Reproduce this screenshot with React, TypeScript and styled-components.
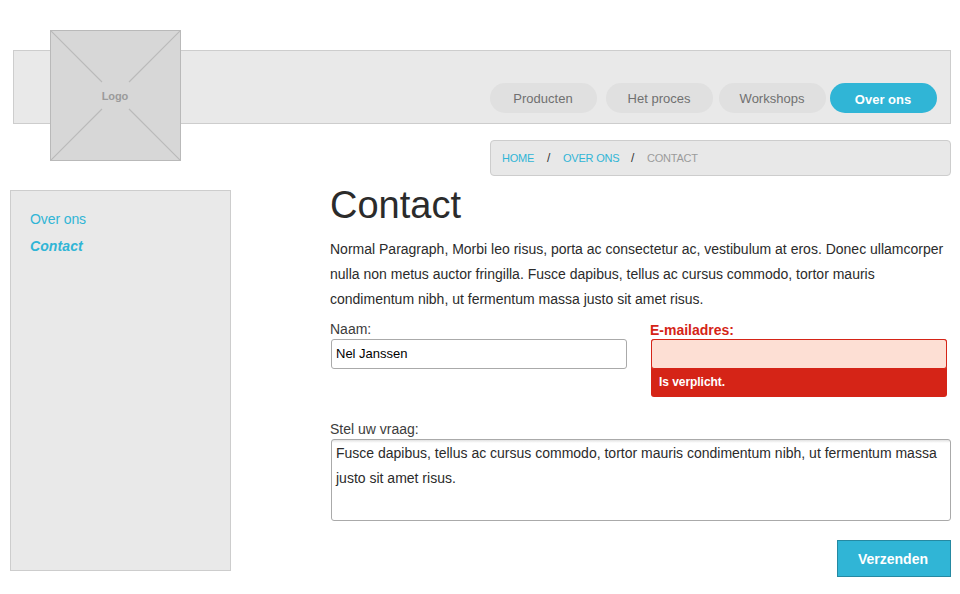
import React from "react";
import styled, { createGlobalStyle } from "styled-components";

const Global = createGlobalStyle`
  * { box-sizing: border-box; }
  body { margin: 0; background: #fff; font-family: "Liberation Sans", Arial, sans-serif; color: #2b2b2b; }
`;

const Page = styled.div`
  width: 960px;
  height: 594px;
  padding: 50px 9px 0 10px;
  overflow: hidden;
`;

const Header = styled.header`
  position: relative;
  display: flex;
  justify-content: flex-end;
  height: 74px;
  margin-left: 3px;
  padding: 32px 13px 0 0;
  background: #e9e9e9;
  border: 1px solid #cdcdcd;
`;

const Logo = styled.div`
  position: absolute;
  top: -21px;
  left: 36px;
  display: grid;
  place-items: center;
  width: 131px;
  height: 131px;
  background: #d7d7d7;
  border: 1px solid #b9b9b9;
`;

const LogoLines = styled.svg`
  grid-area: 1 / 1;
  width: 129px;
  height: 129px;
`;

const LogoText = styled.span`
  grid-area: 1 / 1;
  margin-right: 1px;
  font-size: 11px;
  line-height: 14px;
  font-weight: bold;
  letter-spacing: -0.1px;
  color: #9b9b9b;
`;

const Nav = styled.nav`
  display: flex;
`;

const Pill = styled.a<{ $active?: boolean; $gap?: number }>`
  width: 107px;
  height: 30px;
  margin-left: ${(p) => p.$gap ?? 0}px;
  padding-top: ${(p) => (p.$active ? 1 : 0)}px;
  padding-right: 1px;
  border-radius: 15px;
  background: ${(p) => (p.$active ? "#30b5d6" : "#e0e0e0")};
  color: ${(p) => (p.$active ? "#fff" : "#707070")};
  font-size: 13px;
  font-weight: ${(p) => (p.$active ? "bold" : "normal")};
  line-height: 31px;
  text-align: center;
`;

const Breadcrumb = styled.div`
  display: flex;
  width: 461px;
  height: 36px;
  margin: 16px 0 0 auto;
  padding-left: 11px;
  border: 1px solid #cdcdcd;
  border-radius: 4px;
  background: #e8e8e8;
  font-size: 11px;
  line-height: 35px;
  white-space: pre;
`;

const Crumb = styled.span<{ $w: number; $muted?: boolean }>`
  width: ${(p) => p.$w}px;
  letter-spacing: -0.22px;
  color: ${(p) => (p.$muted ? "#9b9b9b" : "#30b5d6")};
`;

const Slash = styled.span`
  width: 28px;
  padding-left: 12px;
  font-size: 12px;
  color: #333;
`;

const Columns = styled.div`
  display: flex;
  justify-content: space-between;
  margin-top: 14px;
`;

const Sidebar = styled.aside`
  width: 221px;
  height: 381px;
  padding: 15px 19px;
  border: 1px solid #cdcdcd;
  background: #e9e9e9;
`;

const SideLink = styled.a<{ $active?: boolean }>`
  display: block;
  height: 27px;
  line-height: 27px;
  font-size: 14px;
  letter-spacing: ${(p) => (p.$active ? 0.1 : -0.1)}px;
  color: #30b5d6;
  font-weight: ${(p) => (p.$active ? "bold" : "normal")};
  font-style: ${(p) => (p.$active ? "italic" : "normal")};
`;

const Main = styled.main`
  width: 621px;
`;

const Title = styled.h1`
  margin: -7px 0 0;
  height: 54px;
  font-size: 38px;
  line-height: 44px;
  font-weight: normal;
`;

const Text = styled.p`
  margin: 0;
  font-size: 14px;
  line-height: 25px;
  white-space: pre;
`;

const Fields = styled.form`
  display: flex;
  gap: 24px;
  height: 100px;
  margin-top: 9px;
`;

const Field = styled.div`
  width: 296px;
`;

const Label = styled.label<{ $error?: boolean }>`
  display: block;
  height: 18px;
  padding-top: ${(p) => (p.$error ? 1 : 0)}px;
  margin-left: -1px;
  font-size: 14px;
  line-height: 17px;
  font-weight: ${(p) => (p.$error ? "bold" : "normal")};
  color: ${(p) => (p.$error ? "#d52417" : "#3c3c3c")};
`;

const Input = styled.div<{ $error?: boolean }>`
  height: 30px;
  padding-left: 4px;
  border: 1px solid ${(p) => (p.$error ? "#d52417" : "#aaa")};
  border-radius: 3px;
  background: ${(p) => (p.$error ? "#fddfd4" : "#fff")};
  color: #000;
  font-size: 13px;
  line-height: 28px;
`;

const ErrorBox = styled.div`
  height: 58px;
  border-radius: 3px;
  background: #d52417;
`;

const ErrorText = styled.div`
  padding-left: 8px;
  color: #fff;
  font-size: 12px;
  font-weight: bold;
  letter-spacing: -0.05px;
  line-height: 26px;
`;

const Question = styled.div`
  padding-left: 1px;
`;

const TextArea = styled.div`
  height: 82px;
  padding: 1px 4px;
  border: 1px solid #aaa;
  border-radius: 3px;
  background: linear-gradient(#e2e2e2, #fff 3px);
`;

const Submit = styled.button`
  display: block;
  width: 114px;
  height: 37px;
  margin: 19px 0 0 auto;
  padding: 0 2px 0 0;
  border: 1px solid #2589a2;
  background: #30b5d6;
  color: #fff;
  font: bold 14px "Liberation Sans", Arial, sans-serif;
`;

export default function App() {
  return (
    <>
      <Global />
      <Page>
        <Header>
          <Logo>
            <LogoLines viewBox="0 0 129 129" stroke="#bababa" strokeWidth="1.2">
              <path d="M0 0L51 51M129 0L78 51M0 129L51 78M129 129L78 78" />
            </LogoLines>
            <LogoText>Logo</LogoText>
          </Logo>
          <Nav>
            <Pill>Producten</Pill>
            <Pill $gap={9}>Het proces</Pill>
            <Pill $gap={6}>Workshops</Pill>
            <Pill $gap={4} $active>Over ons</Pill>
          </Nav>
        </Header>
        <Breadcrumb>
          <Crumb $w={33}>HOME</Crumb>
          <Slash>/</Slash>
          <Crumb $w={56}>OVER ONS</Crumb>
          <Slash>/</Slash>
          <Crumb $w={60} $muted>CONTACT</Crumb>
        </Breadcrumb>
        <Columns>
          <Sidebar>
            <SideLink>Over ons</SideLink>
            <SideLink $active>Contact</SideLink>
          </Sidebar>
          <Main>
            <Title>Contact</Title>
            <Text>
              {"Normal Paragraph, Morbi leo risus, porta ac consectetur ac, vestibulum at eros. Donec ullamcorper\nnulla non metus auctor fringilla. Fusce dapibus, tellus ac cursus commodo, tortor mauris\ncondimentum nibh, ut fermentum massa justo sit amet risus."}
            </Text>
            <Question>
              <Fields>
                <Field>
                  <Label>Naam:</Label>
                  <Input>Nel Janssen</Input>
                </Field>
                <Field>
                  <Label $error>E-mailadres:</Label>
                  <ErrorBox>
                    <Input $error />
                    <ErrorText>Is verplicht.</ErrorText>
                  </ErrorBox>
                </Field>
              </Fields>
              <Label>Stel uw vraag:</Label>
              <TextArea>
                <Text>
                  {"Fusce dapibus, tellus ac cursus commodo, tortor mauris condimentum nibh, ut fermentum massa\njusto sit amet risus."}
                </Text>
              </TextArea>
            </Question>
            <Submit>Verzenden</Submit>
          </Main>
        </Columns>
      </Page>
    </>
  );
}
